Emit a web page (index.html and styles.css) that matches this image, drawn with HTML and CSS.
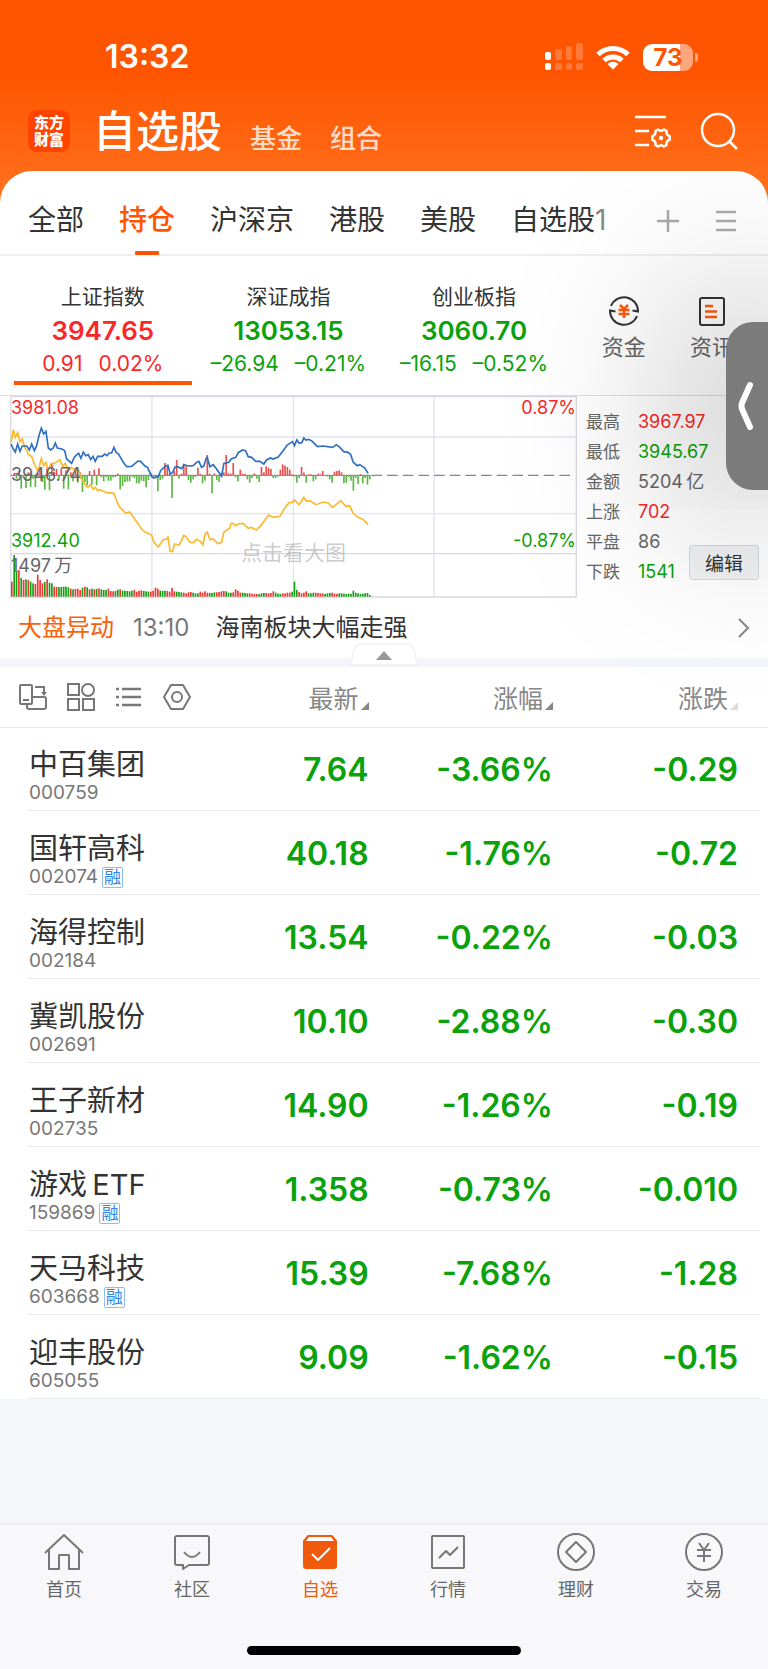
FILE: index.html
```html
<!DOCTYPE html>
<html lang="zh-CN">
<head>
    <meta charset="UTF-8">
    <meta name="viewport" content="width=device-width, initial-scale=1.0">
    <title>自选股</title>
    <link rel="stylesheet" href="styles.css">
</head>
<body>
    <div class="app">
        <div class="status-bar">
            <span class="clock">13:32</span>
            <svg class="signal" width="38" height="28" viewBox="0 0 38 28" fill="#fff">
                <rect x="0" y="9" width="6" height="8" rx="2"/>
                <rect x="0" y="20" width="6" height="7" rx="2"/>
                <g opacity=".22">
                    <rect x="10" y="6" width="7" height="11" rx="2"/>
                    <rect x="10" y="20" width="7" height="7" rx="2"/>
                    <rect x="21" y="3" width="6" height="14" rx="2"/>
                    <rect x="21" y="20" width="6" height="7" rx="2"/>
                    <rect x="31" y="0" width="7" height="17" rx="2"/>
                    <rect x="31" y="20" width="7" height="7" rx="2"/>
                </g>
            </svg>
            <svg class="wifi" width="34" height="25" viewBox="0 0 34 25" fill="none" stroke="#fff" stroke-width="5">
                <path d="M2 9.5a21.500 21.500 0 0 1 30 0"/>
                <path d="M8 15.500a13.500 13.500 0 0 1 18 0"/>
                <path d="M17 24.500l-5.500-5.600a8 8 0 0 1 11 0z" fill="#fff" stroke="none"/>
            </svg>
            <span class="battery">73</span>
        </div>

        <header class="title-bar">
            <div class="logo">东方<br>财富</div>
            <h1>自选股</h1>
            <a class="title-link" href="#">基金</a>
            <a class="title-link" href="#">组合</a>
            <button class="icon-button push" aria-label="设置">
                <svg width="38" height="36" viewBox="0 0 38 36" fill="none" stroke="#fff" stroke-width="2.500">
                    <path d="M1 4h31M1 18h14M1 32h14"/>
                    <path stroke-linejoin="round" d="M24 16.500q3 2.500 6 0l2.500 1.500q-.5 4 3.200 5.200v3.600q-3.700 1.200-3.200 5.200l-2.500 1.500q-3-2.500-6 0l-2.500-1.500q.5-4-3.200-5.200v-3.600q3.700-1.200 3.200-5.200z"/>
                    <circle cx="27" cy="25" r="1.500" fill="#fff" stroke-width="1.500"/>
                </svg>
            </button>
            <button class="icon-button" aria-label="搜索">
                <svg width="38" height="38" viewBox="0 0 38 38" fill="none" stroke="#fff" stroke-width="2.500">
                    <circle cx="18" cy="18" r="16"/>
                    <path d="M29 29l8 8"/>
                </svg>
            </button>
        </header>

        <main class="sheet">
            <nav class="groups">
                <a href="#">全部</a>
                <a href="#" class="active">持仓</a>
                <a href="#">沪深京</a>
                <a href="#">港股</a>
                <a href="#">美股</a>
                <a href="#">自选股<span class="faded">1</span></a>
                <button class="icon-button push" aria-label="添加">
                    <svg width="24" height="24" viewBox="0 0 24 24" stroke="#aaa" stroke-width="2.500">
                        <path d="M1 12h22M12 1v22"/>
                    </svg>
                </button>
                <button class="icon-button" aria-label="菜单">
                    <svg width="22" height="24" viewBox="0 0 22 24" stroke="#aaa" stroke-width="2.500">
                        <path d="M1 3h20M1 12h20M1 21h20"/>
                    </svg>
                </button>
            </nav>

            <section class="indices">
                <div class="index up selected">
                    <div class="index-name">上证指数</div>
                    <div class="index-value">3947.65</div>
                    <div class="index-change"><span>0.91</span><span>0.02%</span></div>
                </div>
                <div class="index down">
                    <div class="index-name">深证成指</div>
                    <div class="index-value">13053.15</div>
                    <div class="index-change"><span>–26.94</span><span>–0.21%</span></div>
                </div>
                <div class="index down">
                    <div class="index-name">创业板指</div>
                    <div class="index-value">3060.70</div>
                    <div class="index-change"><span>–16.15</span><span>–0.52%</span></div>
                </div>
                <div class="shortcuts">
                    <a href="#" class="shortcut">
                        <svg width="32" height="32" viewBox="0 0 32 32" fill="none" stroke="#333" stroke-width="2">
                            <path d="M3 11A14 14 0 0 1 30 16.500L24.500 15.500"/>
                            <path d="M29 21A14 14 0 0 1 2 15.500L7.500 16.500"/>
                            <path stroke="#ff5a0a" stroke-width="2.500" d="M12 10l4 4 4-4M10.500 15h11M10.500 19h11M16 14v9"/>
                        </svg>
                        资金
                    </a>
                    <a href="#" class="shortcut">
                        <svg width="32" height="32" viewBox="0 0 32 32" fill="none" stroke="#333" stroke-width="2">
                            <rect x="4" y="3" width="24" height="27" rx="2"/>
                            <path stroke="#ff5a0a" stroke-width="2.500" d="M9 11h8M9 16.500h12M9 22h12"/>
                        </svg>
                        资讯
                    </a>
                </div>
            </section>

            <section class="market">
                <div class="chart">
                    <svg viewBox="30 16 1702 606" preserveAspectRatio="none">
                        <g fill="none" stroke="#e2e4ee" stroke-width="4">
                            <path d="M456 16V620M881 16V620M1303 16V620M30 139H1732M30 369H1732"/>
                            <path stroke="#d9d9e2" d="M30 489H1732M32 18H1730V619H32z"/>
                        </g>
                        <path d="M33 254H1112" stroke="#777" stroke-width="3"/>
                        <path d="M1115 254H1720" stroke="#888" stroke-width="4" stroke-dasharray="32 15"/>
                        <g id="bars"></g>
                        <polyline class="line average" points="33,155 40,118 46,140 53,126 60,153 67,145 74,170 80,180 86,192 95,198 103,220 112,238 118,228 124,203 131,225 138,215 145,240 152,220 165,217 180,207 188,228 196,218 205,240 214,230 225,240 236,238 243,262 258,285 264,290 272,282 280,296 286,290 293,300 300,297 320,306 342,308 350,330 357,347 377,367 390,364 400,380 415,400 425,415 435,424 444,427 455,434 462,455 475,469 490,447 500,445 504,440 511,482 518,482 524,460 538,463 552,434 560,440 570,455 580,456 590,446 602,452 609,463 616,430 622,424 630,447 638,444 655,459 665,455 672,425 690,412 694,398 700,398 708,405 715,400 730,398 745,413 755,410 770,418 785,402 806,373 820,380 840,377 855,352 868,336 878,335 884,328 898,342 912,320 920,332 930,330 948,342 970,334 985,337 998,350 1023,330 1038,347 1050,346 1060,368 1072,378 1092,388 1105,402"/>
                        <polyline class="line price" points="33,160 40,175 46,184 53,160 60,182 67,166 80,166 88,178 95,160 103,180 110,165 117,135 124,112 131,130 138,122 145,172 152,178 160,172 166,157 172,172 186,175 194,180 200,205 215,218 222,202 229,193 236,188 243,203 250,184 257,195 265,192 272,207 279,197 286,212 293,197 307,197 314,190 321,195 328,187 335,187 342,170 349,186 356,190 370,215 380,228 395,227 414,211 422,212 435,226 443,230 455,258 462,262 476,256 482,240 497,226 504,224 511,250 518,246 525,230 533,228 545,234 552,222 565,226 580,225 590,215 597,212 605,230 612,226 618,205 622,200 630,228 640,222 650,235 665,257 672,218 687,215 694,205 708,200 715,186 728,178 737,180 745,198 755,200 768,212 780,212 792,220 800,208 812,202 820,205 835,199 850,180 862,163 870,158 878,153 884,165 891,148 898,157 906,156 912,142 918,148 926,146 935,150 953,168 970,166 998,170 1010,162 1020,170 1032,183 1045,185 1053,192 1060,214 1072,225 1080,222 1095,232 1105,248"/>
                    </svg>
                    <span class="chart-label high up">3981.08</span>
                    <span class="chart-label middle">3946.74</span>
                    <span class="chart-label low down">3912.40</span>
                    <span class="chart-label volume">1497&thinsp;万</span>
                    <span class="chart-label high right up">0.87%</span>
                    <span class="chart-label low right down">-0.87%</span>
                    <span class="chart-hint">点击看大图</span>
                </div>
                <dl class="stats">
                    <dt>最高</dt><dd class="up">3967.97</dd>
                    <dt>最低</dt><dd class="down">3945.67</dd>
                    <dt>金额</dt><dd>5204&thinsp;亿</dd>
                    <dt>上涨</dt><dd class="up">702</dd>
                    <dt>平盘</dt><dd>86</dd>
                    <dt>下跌</dt><dd class="down">1541</dd>
                </dl>
                <button class="edit">编辑</button>
            </section>

            <a href="#" class="news">
                <span class="news-tag">大盘异动</span>
                <span class="news-time">13:10</span>
                <span>海南板块大幅走强</span>
                <svg class="push" width="12" height="20" viewBox="0 0 12 20" fill="none" stroke="#888" stroke-width="2">
                    <path d="M1 1l9 9-9 9"/>
                </svg>
            </a>
            <div class="divider">
                <button class="collapse" aria-label="收起">
                    <svg width="68" height="23" viewBox="0 0 68 23">
                        <path d="M1 22C4 8 3 1 12 1H56C65 1 64 8 67 22z" fill="#fff" stroke="#f0f1f4" stroke-width="1.500"/>
                        <path d="M26 17l8-9 8 9z" fill="#999"/>
                    </svg>
                </button>
            </div>

            <table class="stocks">
                <thead>
                    <tr>
                        <th>
                            <div class="tools">
                                <button class="icon-button" aria-label="横屏">
                                    <svg width="28" height="28" viewBox="0 0 28 28" fill="none" stroke="#777" stroke-width="2">
                                        <rect x="1" y="2" width="12" height="19" rx="1"/>
                                        <path d="M4 17h6M16 4h9v6M13 14h12q2 0 2 2v8q0 2-2 2H10q-2 0-2-2v-3"/>
                                        <path d="M22 9h6l-3 4z" fill="#777" stroke="none"/>
                                    </svg>
                                </button>
                                <button class="icon-button" aria-label="宫格">
                                    <svg width="28" height="28" viewBox="0 0 28 28" fill="none" stroke="#777" stroke-width="2">
                                        <rect x="1" y="1" width="11" height="11"/>
                                        <circle cx="21" cy="7" r="6"/>
                                        <rect x="1" y="16" width="11" height="11"/>
                                        <rect x="16" y="16" width="11" height="11"/>
                                    </svg>
                                </button>
                                <button class="icon-button" aria-label="列表">
                                    <svg width="28" height="28" viewBox="0 0 28 28" fill="none" stroke="#777" stroke-width="2.500">
                                        <path d="M1 6h3M7 6h19M1 14h3M7 14h19M1 22h3M7 22h19"/>
                                    </svg>
                                </button>
                                <button class="icon-button" aria-label="设置">
                                    <svg width="28" height="28" viewBox="0 0 28 28" fill="none" stroke="#777" stroke-width="2" stroke-linejoin="round">
                                        <path d="M8 2h12l7 12-7 12H8L1 14z"/>
                                        <circle cx="14" cy="14" r="5"/>
                                    </svg>
                                </button>
                            </div>
                        </th>
                        <th><button class="sort">最新</button></th>
                        <th><button class="sort">涨幅</button></th>
                        <th><button class="sort faded">涨跌</button></th>
                    </tr>
                </thead>
                <tbody>
                    <tr>
                        <td><div class="name">中百集团</div><div class="code">000759</div></td>
                        <td>7.64</td><td>-3.66%</td><td>-0.29</td>
                    </tr>
                    <tr>
                        <td><div class="name">国轩高科</div><div class="code">002074<span class="tag">融</span></div></td>
                        <td>40.18</td><td>-1.76%</td><td>-0.72</td>
                    </tr>
                    <tr>
                        <td><div class="name">海得控制</div><div class="code">002184</div></td>
                        <td>13.54</td><td>-0.22%</td><td>-0.03</td>
                    </tr>
                    <tr>
                        <td><div class="name">冀凯股份</div><div class="code">002691</div></td>
                        <td>10.10</td><td>-2.88%</td><td>-0.30</td>
                    </tr>
                    <tr>
                        <td><div class="name">王子新材</div><div class="code">002735</div></td>
                        <td>14.90</td><td>-1.26%</td><td>-0.19</td>
                    </tr>
                    <tr>
                        <td><div class="name">游戏&thinsp;ETF</div><div class="code">159869<span class="tag">融</span></div></td>
                        <td>1.358</td><td>-0.73%</td><td>-0.010</td>
                    </tr>
                    <tr>
                        <td><div class="name">天马科技</div><div class="code">603668<span class="tag">融</span></div></td>
                        <td>15.39</td><td>-7.68%</td><td>-1.28</td>
                    </tr>
                    <tr>
                        <td><div class="name">迎丰股份</div><div class="code">605055</div></td>
                        <td>9.09</td><td>-1.62%</td><td>-0.15</td>
                    </tr>
                </tbody>
            </table>

            <button class="side-tab" aria-label="展开">
                <svg width="16" height="50" viewBox="0 0 16 50" fill="none" stroke="#fff" stroke-width="6" stroke-linecap="round" stroke-linejoin="round">
                    <path d="M12 4L4 22q-1 3 0 6l8 18"/>
                </svg>
            </button>
        </main>

        <nav class="tab-bar">
            <a href="#">
                <svg width="40" height="40" viewBox="0 0 40 40">
                    <path d="M1 21L20 3l19 18M5 18v19h10V23h10v14h10V18"/>
                </svg>
                首页
            </a>
            <a href="#">
                <svg width="40" height="40" viewBox="0 0 40 40">
                    <path d="M5 4h30q2 0 2 2v25q0 2-2 2H17l-6 4v-4H5q-2 0-2-2V6q0-2 2-2zM12 20q8 10 16 0"/>
                </svg>
                社区
            </a>
            <a href="#" class="active">
                <svg width="40" height="40" viewBox="0 0 40 40">
                    <path d="M8 4h24l4 5v25q0 2-2 2H6q-2 0-2-2V9z" fill="#f15a0a"/>
                    <path d="M9 5h22l3 4H6z" fill="#fff" stroke="none"/>
                    <path d="M12 22l6 6 12-12" stroke="#fff"/>
                </svg>
                自选
            </a>
            <a href="#">
                <svg width="40" height="40" viewBox="0 0 40 40">
                    <rect x="4" y="4" width="32" height="32" rx="1"/>
                    <path d="M11 26l7-7 4 4 8-8"/>
                </svg>
                行情
            </a>
            <a href="#">
                <svg width="40" height="40" viewBox="0 0 40 40">
                    <circle cx="20" cy="20" r="18"/>
                    <path d="M20 10l10 10-10 10-10-10z"/>
                </svg>
                理财
            </a>
            <a href="#">
                <svg width="40" height="40" viewBox="0 0 40 40">
                    <circle cx="20" cy="20" r="18"/>
                    <path d="M15 11l5 7 5-7M13 18h14M13 24h14M20 18v12"/>
                </svg>
                交易
            </a>
        </nav>
        <div class="home-indicator"></div>
    </div>

    <script src="chart.js"></script>
</body>
</html>
```
FILE: styles.css
```css
* {
    box-sizing: border-box;
}
body {
    margin: 0;
    font-family: Inter, "Noto Sans CJK SC", sans-serif;
    color: #333;
}
h1, dl, dd {
    margin: 0;
}
a {
    color: inherit;
    text-decoration: none;
}
button {
    padding: 0;
    border: none;
    background: none;
    font: inherit;
    color: inherit;
    cursor: pointer;
}
svg {
    display: block;
    flex-shrink: 0;
}
.app {
    display: flex;
    flex-direction: column;
    min-height: 100vh;
    background: linear-gradient(#ff5500 75px, #ff7320 205px) no-repeat 0 0 / 100% 205px, #f8f8fb;
}
.push {
    margin-left: auto;
}
.up {
    color: #fb2727;
}
.down {
    color: #0aa20a;
}

/* status bar */
.status-bar {
    display: flex;
    align-items: center;
    padding: 38px 75px 0 105px;
    color: #fff;
}
.clock {
    font-size: 32px;
    font-weight: 600;
    line-height: 38px;
}
.signal {
    margin-left: auto;
}
.wifi {
    margin: 0 13px;
}
.battery {
    position: relative;
    width: 50px;
    border-radius: 9px;
    background: linear-gradient(to right, #fff 73%, #ffa77c 73%);
    color: #ff5500;
    font-size: 24px;
    font-weight: 700;
    line-height: 27px;
    text-align: center;
}
.battery::after {
    content: "";
    position: absolute;
    top: 9px;
    right: -5px;
    width: 3px;
    height: 9px;
    border-radius: 0 4px 4px 0;
    background: #ffa77c;
}

/* title bar */
.title-bar {
    display: flex;
    align-items: center;
    padding: 25px 30px 10px 28px;
    color: #fff;
}
.logo {
    width: 42px;
    height: 42px;
    padding-top: 4px;
    border-radius: 9px;
    background: #ff4400;
    font-size: 15px;
    font-weight: 900;
    line-height: 17px;
    text-align: center;
}
h1 {
    margin: 0 4px 0 23px;
    font-size: 43px;
    font-weight: 500;
    line-height: 60px;
}
.title-link {
    margin: 16px 4px 0 24px;
    color: #ffdcc8;
    font-size: 26px;
    font-weight: 500;
    line-height: 36px;
}
.title-bar .icon-button + .icon-button {
    margin-left: 28px;
}

/* sheet */
.sheet {
    position: relative;
    flex: 1;
    border-radius: 32px 32px 0 0;
    background: linear-gradient(#fff, #fff) no-repeat 0 0 / 100% 600px, #f6f7f9;
    overflow: hidden;
}
.groups {
    display: flex;
    align-items: center;
    gap: 35px;
    height: 85px;
    padding: 0 31px 0 28px;
    border-bottom: 2px solid #efeff1;
    font-size: 28px;
    white-space: nowrap;
}
.groups a {
    position: relative;
    height: 83px;
    padding-top: 8px;
    line-height: 83px;
}
.groups .active {
    color: #ff5500;
    font-weight: 500;
}
.groups .active::after {
    content: "";
    position: absolute;
    bottom: -1px;
    left: 16px;
    width: 24px;
    height: 4px;
    border-radius: 1px;
    background: #ff5500;
}
.faded {
    color: #888;
}
.groups .icon-button {
    margin-top: 16px;
}

/* indices */
.indices {
    display: flex;
    padding: 25px 14px 10px;
}
.index {
    width: 24%;
    margin-right: 8px;
    padding-bottom: 2px;
    border-bottom: 4px solid transparent;
    text-align: center;
    white-space: nowrap;
}
.index.selected {
    border-color: #ff5500;
}
.index-name {
    color: #333;
    font-size: 21px;
    line-height: 31px;
}
.index-value {
    font-size: 26px;
    font-weight: 600;
    line-height: 37px;
}
.index-change {
    display: flex;
    justify-content: center;
    gap: 16px;
    font-size: 21px;
    line-height: 30px;
}
.shortcuts {
    display: flex;
    flex: 1;
    justify-content: space-between;
    padding: 14px 20px 0 31px;
}
.shortcut {
    display: flex;
    flex-direction: column;
    align-items: center;
    gap: 5px;
    color: #666;
    font-size: 22px;
    line-height: 30px;
    white-space: nowrap;
}

/* chart and figures */
.market {
    position: relative;
    display: flex;
    border-top: 1px solid #ddd;
}
.chart {
    position: relative;
    flex: 1;
    margin-left: 10px;
}
.chart > svg {
    width: 100%;
    height: 202px;
}
.line {
    fill: none;
    stroke-width: 5;
}
.price {
    stroke: #2f6fc0;
}
.average {
    stroke: #fdb92e;
}
.chart-label {
    position: absolute;
    left: 1px;
    font-size: 18px;
    line-height: 24px;
}
.chart-label.right {
    left: auto;
    right: 1px;
}
.chart-label.high {
    top: 0;
}
.chart-label.middle {
    top: 67px;
    color: #666;
}
.chart-label.low {
    top: 133px;
}
.chart-label.volume {
    top: 158px;
    color: #666;
}
.chart-hint {
    position: absolute;
    top: 142px;
    left: 0;
    right: 0;
    color: rgba(120, 120, 120, .4);
    font-size: 21px;
    line-height: 30px;
    text-align: center;
}
.stats {
    display: grid;
    grid-template-columns: 52px 1fr;
    align-content: start;
    width: 191px;
    padding: 11px 0 0 9px;
    color: #666;
    font-size: 17px;
    line-height: 30px;
}
.stats dd {
    font-size: 18px;
}
.edit {
    position: absolute;
    right: 9px;
    bottom: 18px;
    width: 70px;
    height: 35px;
    border: 1px solid #d5d8dc;
    border-radius: 3px;
    background: #f0f1f3;
    font-size: 19px;
}

/* news */
.news {
    display: flex;
    align-items: center;
    padding: 11px 18px;
    font-size: 24px;
    line-height: 38px;
}
.news-tag {
    color: #f7600c;
}
.news-time {
    margin: 0 26px 0 19px;
    color: #777;
}
.divider {
    position: relative;
    height: 9px;
    background: #f5f6f9;
}
.collapse {
    position: absolute;
    bottom: 1px;
    left: 50%;
    transform: translateX(-50%);
}

/* stock table */
.stocks {
    width: 100%;
    border-collapse: collapse;
    table-layout: fixed;
    background: #fff;
}
.stocks th {
    height: 60px;
    padding: 0;
    border-bottom: 1px solid #e8e8ea;
    color: #888;
    font-size: 25px;
    font-weight: 400;
    text-align: right;
}
.stocks th:nth-child(1) {
    width: 26%;
}
.stocks th:nth-child(2) {
    width: 22%;
}
.stocks th:nth-child(3) {
    width: 24%;
}
.tools {
    display: flex;
    gap: 20px;
    padding-left: 19px;
}
.sort {
    position: relative;
    padding-right: 10px;
}
.sort::after {
    content: "";
    position: absolute;
    right: 0;
    bottom: 5px;
    border: 4px solid;
    border-color: transparent #888 #888 transparent;
}
.sort.faded::after {
    border-color: transparent #ddd #ddd transparent;
}
.stocks tbody tr {
    background: linear-gradient(#e9e9ec, #e9e9ec) no-repeat 28px 100% / calc(100% - 36px) 1px;
}
.stocks td {
    height: 84px;
    padding: 0;
    color: #0aa20a;
    font-size: 32px;
    font-weight: 600;
    text-align: right;
}
.stocks td:first-child {
    padding: 14px 0 0 29px;
    color: #333;
    font-weight: 400;
    text-align: left;
}
.stocks th:last-child, .stocks td:last-child {
    padding-right: 30px;
}
.name {
    font-size: 29px;
    line-height: 34px;
    white-space: nowrap;
}
.code {
    display: flex;
    align-items: center;
    gap: 4px;
    color: #777;
    font-size: 19px;
    line-height: 22px;
}
.tag {
    width: 21px;
    border: 1px solid #8dbcf0;
    border-radius: 2px;
    color: #2f86e8;
    font-size: 17px;
    line-height: 19px;
    text-align: center;
}

/* side tab */
.side-tab {
    position: absolute;
    top: 151px;
    right: 0;
    display: flex;
    align-items: center;
    width: 42px;
    height: 168px;
    padding-left: 12px;
    border-radius: 27px 0 0 27px;
    background: #7b7b7b;
    box-shadow: 0 0 180px 30px rgba(0, 0, 0, .36);
}

/* bottom bar */
.tab-bar {
    display: flex;
    padding: 7px 0 44px;
    border-top: 2px solid #ebebee;
    background: #f8f8fb;
    color: #666;
    font-size: 18px;
    line-height: 30px;
}
.tab-bar a {
    display: flex;
    flex: 1;
    flex-direction: column;
    align-items: center;
    gap: 3px;
}
.tab-bar svg {
    fill: none;
    stroke: #777;
    stroke-width: 2;
    stroke-linejoin: round;
}
.tab-bar .active {
    color: #f15a0a;
}
.tab-bar .active svg {
    stroke: #f15a0a;
}
.home-indicator {
    width: 274px;
    height: 9px;
    margin: -3px auto 14px;
    border-radius: 5px;
    background: #000;
}
```
FILE: chart.js
```js
// minute bars: momentum around the zero line, volume along the bottom
const momentum = [
    0, 6, -10, 12, -40, -8, -38, 8, -35, -10, -35, 6, 20, -20, -43, 22, -45, 34, 10, 18, -12, 20, -40, 14, -42, 8,
    -18, 22, -22, 8, -50, -20, -30, 12, -28, 16, -30, 20, -6, -18, -5, -16, -16, -6, -5, 4, -42, -32, -20, -18, -18, -4,
    -8, -24, -24, -16, -18, -36, -14, 6, -8, -5, -48, -14, -10, 36, 25, 4, -68, 12, 45, -10, 4, 34, 26, -14, -22, -12,
    -5, 22, 3, -24, -16, 60, 4, -54, 5, -14, -20, 6, 8, 60, 5, 4, 36, -6, -18, 16, 4, 3, -12, -22, -8, 5, -10, -20,
    24, 8, 26, 22, 18, -8, -8, -4, 16, 32, 28, 24, 16, 2, -4, -22, -8, 24, 8, -22, 2, 2, -18, -12, 4, 2, 12, -2,
    -4, -12, -22, 10, 12, 14, 8, -24, -22, -5, -16, -46, -8, -26, 3, -24, -8, -28, -12
];
const volume = [
    45, 125, 78, 80, 56, 50, 52, 50, 45, 40, 38, 66, 50, 40, 44, 52, 42, 40, 30, 29, 29, 29, 30, 30, 28, 24,
    22, 23, 24, 20, 27, 30, 28, 22, 24, 22, 23, 25, 22, 20, 20, 24, 17, 16, 17, 21, 22, 18, 18, 17, 16, 18,
    20, 15, 18, 19, 17, 16, 15, 15, 18, 27, 24, 18, 17, 18, 17, 15, 26, 16, 15, 14, 13, 12, 10, 13, 14, 12,
    10, 10, 15, 12, 16, 12, 11, 11, 13, 13, 14, 16, 17, 16, 12, 12, 13, 22, 18, 12, 12, 11, 10, 10, 9, 8,
    8, 8, 10, 11, 11, 10, 11, 16, 12, 9, 8, 10, 10, 12, 12, 15, 45, 20, 14, 10, 12, 16, 10, 10, 12, 12,
    11, 10, 10, 8, 10, 11, 12, 9, 8, 10, 10, 9, 8, 9, 8, 18, 12, 10, 8, 9, 10, 11, 5
];
const falling = [1, 2, 4, 6, 8, 9, 14, 16, 17, 20, 21, 22, 23, 24, 26, 30, 32, 34, 36, 38, 39, 40, 44, 45, 47, 48, 49];
const step = 7.07;

function bar(x, y, height, color) {
    return `<rect x="${x}" y="${y}" width="5" height="${height}" fill="${color}"/>`;
}

let bars = '';
volume.forEach((value, i) => {
    const isDown = i < 50 ? falling.includes(i) : i % 7 < 3 || i > 138;
    bars += bar(33 + i * step, 618 - value, value, isDown ? '#12a012' : '#f23535');
});
momentum.forEach((value, i) => {
    const x = 33 + i * step;
    bars += value > 0 ? bar(x, 253 - value, value, '#e95050') : bar(x, 254, -value, '#5cb843');
});
document.getElementById('bars').innerHTML = bars;
```
